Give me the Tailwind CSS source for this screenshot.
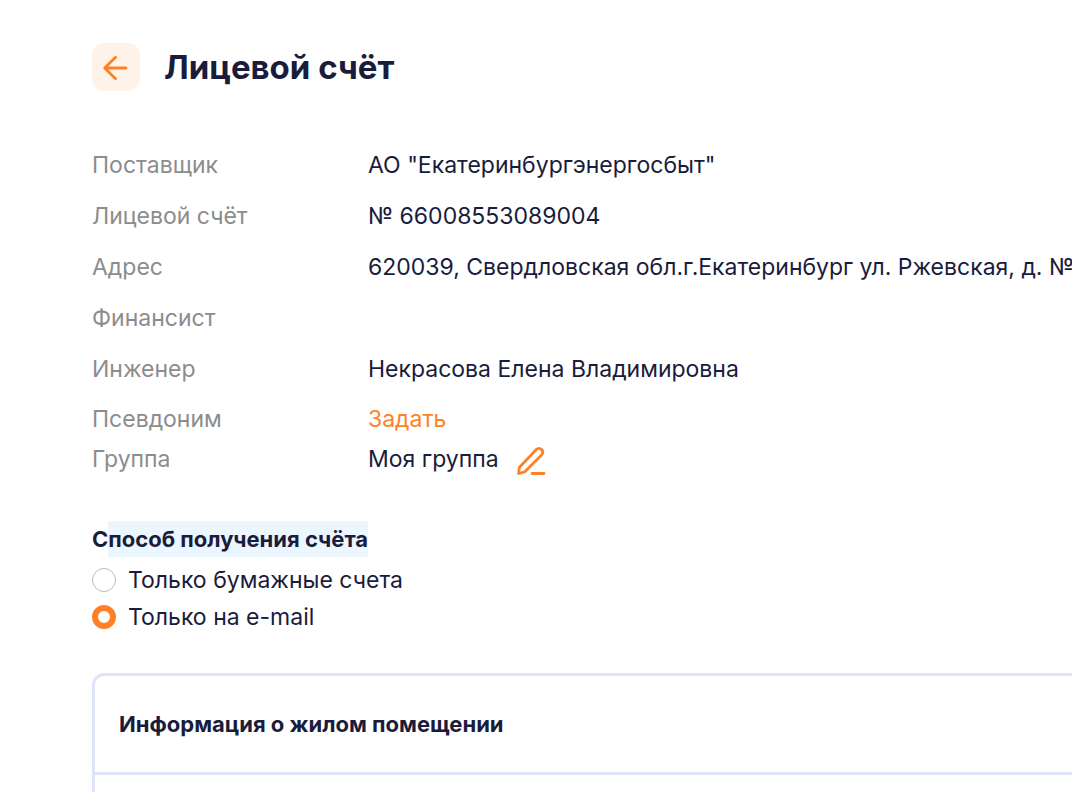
<!DOCTYPE html>
<html lang="ru">
<head>
  <meta charset="UTF-8">
  <meta name="viewport" content="width=device-width, initial-scale=1.0">
  <title>Лицевой счёт</title>
  <script src="https://cdn.jsdelivr.net/npm/@tailwindcss/browser@4"></script>
</head>
<body class="bg-white font-['Inter',sans-serif] text-[23px] leading-9 text-[#1a1c3b]">
  <main class="flex flex-col min-h-screen overflow-hidden pl-[92px] pt-[43px]">

    <!-- Header -->
    <header class="flex items-center gap-6">
      <button type="button" aria-label="Назад" class="flex items-center justify-center size-12 rounded-xl bg-[#fff2e9] text-[#ff8126]">
        <svg class="size-7" viewBox="0 0 28 28" fill="none" stroke="currentColor" stroke-width="2.8" stroke-linecap="round" stroke-linejoin="round">
          <path d="M24 15H3M13.500 4.200L2.700 15L13.500 25.800"/>
        </svg>
      </button>
      <h1 class="text-[33px] leading-12 font-bold">Лицевой счёт</h1>
    </header>

    <!-- Account details -->
    <dl class="mt-14 whitespace-nowrap">
      <div class="flex mb-[15px]"><dt class="w-69 shrink-0 text-[#8c8c8c]">Поставщик</dt><dd>АО "Екатеринбургэнергосбыт"</dd></div>
      <div class="flex mb-[15px]"><dt class="w-69 shrink-0 text-[#8c8c8c]">Лицевой счёт</dt><dd>№ 66008553089004</dd></div>
      <div class="flex mb-[15px]"><dt class="w-69 shrink-0 text-[#8c8c8c]">Адрес</dt><dd>620039, Свердловская обл.г.Екатеринбург ул. Ржевская, д. № 7</dd></div>
      <div class="flex mb-[15px]"><dt class="w-69 shrink-0 text-[#8c8c8c]">Финансист</dt><dd></dd></div>
      <div class="flex mb-[14px]"><dt class="w-69 shrink-0 text-[#8c8c8c]">Инженер</dt><dd>Некрасова Елена Владимировна</dd></div>
      <div class="flex mb-1"><dt class="w-69 shrink-0 text-[#8c8c8c]">Псевдоним</dt><dd><a href="#" class="text-[#ff8126]">Задать</a></dd></div>
      <div class="flex">
        <dt class="w-69 shrink-0 text-[#8c8c8c]">Группа</dt>
        <dd class="flex items-end gap-4">Моя группа
          <button type="button" aria-label="Изменить группу" class="text-[#ff8126]">
            <svg class="size-8" viewBox="0 0 32 32" fill="none" stroke="currentColor" stroke-width="2.8" stroke-linecap="round" stroke-linejoin="round">
              <path d="M3.500 28.500L4.500 22.300L21.300 4.500Q24 2.200 26.600 4.500Q29 7.200 26.600 10L9.800 26.800ZM17 28.500H29"/>
            </svg>
          </button>
        </dd>
      </div>
    </dl>

    <!-- Delivery method -->
    <fieldset class="mt-11">
      <legend class="mb-[5px] text-[22px] leading-9 font-bold">С<span class="inline-block bg-[#ecf6ff]">пособ получения счёта</span></legend>
      <label class="flex items-center gap-3 mb-px"><input type="radio" name="delivery" class="appearance-none size-6 rounded-full border border-[#b9b9c4] checked:border-6 checked:border-[#ff8126]">Только бумажные счета</label>
      <label class="flex items-center gap-3 mb-px"><input type="radio" name="delivery" checked class="appearance-none size-6 rounded-full border border-[#b9b9c4] checked:border-6 checked:border-[#ff8126]">Только на e-mail</label>
    </fieldset>

    <!-- Dwelling info -->
    <section class="grow mt-[37px] border-3 border-r-0 border-b-0 border-[#dfe5f6] rounded-tl-xl">
      <h2 class="px-6 py-[30px] border-b-3 border-[#dfe5f6] text-[22px] leading-9 font-bold">Информация о жилом помещении</h2>
    </section>
  </main>
</body>
</html>
